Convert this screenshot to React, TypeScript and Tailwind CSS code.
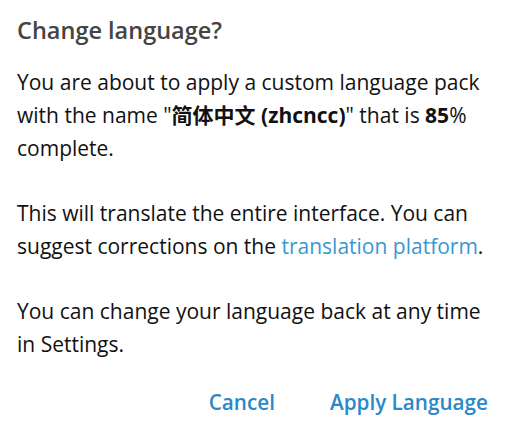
export default function App() {
  return (
    <div className="w-[516px] h-[430px] bg-white flex flex-col" style={{ fontFamily: '"Open Sans", "Noto Sans CJK SC", sans-serif' }}>
      <div className="pl-[17px] pr-[14px] pt-[14px]">
        <h1 className="text-[23.5px] leading-[32px] font-semibold text-[#444444]">Change language?</h1>
        <div className="mt-[20px] text-[21px] leading-[33px] text-[#111111]">
          <p>
            You are about to apply a custom language pack with the name "<b className="font-bold">简体中文 (zhcncc)</b>" that is <b className="font-bold">85</b>% complete.
          </p>
          <p className="mt-[32px]">
            This will translate the entire interface. You can suggest corrections on the <span className="text-[#3a97d1]">translation platform</span>.
          </p>
          <p className="mt-[32px]">
            You can change your language back at any time in Settings.
          </p>
        </div>
      </div>
      <div className="flex justify-end items-center gap-[55px] pr-[28px] mt-[25px]">
        <button className="text-[20.7px] leading-[32px] font-semibold text-[#2a88c9]">Cancel</button>
        <button className="text-[20.7px] leading-[32px] font-semibold text-[#2a88c9]">Apply Language</button>
      </div>
    </div>
  );
}
